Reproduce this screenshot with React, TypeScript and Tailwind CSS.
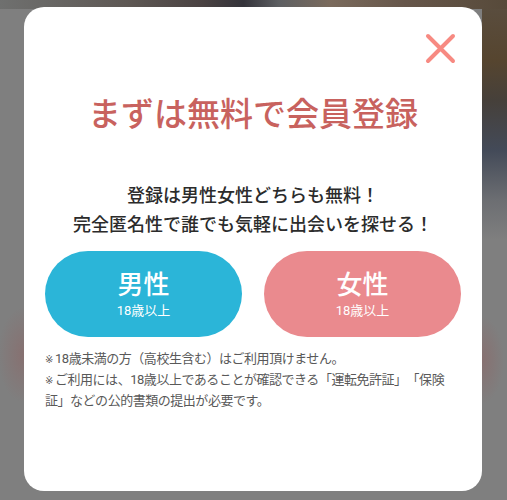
import React from 'react'

const font = 'font-[Roboto,"Noto_Sans_CJK_JP",sans-serif]'

// notes begin with a narrow reference mark, as the source font draws it
const note =
  "before:inline-block before:w-[10px] before:font-['DejaVu_Sans',sans-serif] before:text-[10px] before:tracking-normal before:content-['※']"

function CloseIcon() {
  return (
    <svg width="31" height="31" viewBox="0 0 31 31" fill="none">
      <path
        d="M3 3L28 28M28 3L3 28"
        stroke="#f78a82"
        strokeWidth="4"
        strokeLinecap="round"
      />
    </svg>
  )
}

function GenderButton({ label, color }: { label: string; color: string }) {
  return (
    <button
      className={`flex h-[86px] w-[197px] flex-col items-center justify-center rounded-full text-white ${color}`}
    >
      <span className="text-[26px] leading-[30px] font-medium">{label}</span>
      <span className="mt-[3px] text-[13px] leading-[16px]">18歳以上</span>
    </button>
  )
}

export default function App() {
  return (
    <div
      className={`h-[500px] w-full overflow-hidden pt-[7px] pl-[24px] ${font} [text-spacing-trim:space-all] [background:linear-gradient(to_right,#6f706f_0%,#5e5854_25%,#4a4242_40%,#34333a_48%,#5d5f62_55%,#7a6a5c_65%,#66564a_80%,#574a3a_100%)_top/100%_9px_no-repeat,linear-gradient(to_bottom,#5a4e40_0px,#56452f_60px,#46403a_100px,#434a58_150px,#6c6e72_200px,#7f7f7f_240px)_right_top/25px_300px_no-repeat,radial-gradient(26px_48px_at_24px_355px,rgba(150,85,85,0.35),transparent),radial-gradient(22px_44px_at_482px_360px,rgba(150,85,85,0.35),transparent),#7f7f7f]`}
    >
      <div className="relative h-[484px] w-[458px] rounded-[20px] bg-white px-[21px] pt-[88px]">
        <button className="absolute top-[26px] right-[26px]">
          <CloseIcon />
        </button>
        <h1 className="text-center text-[33px] leading-[40px] font-medium text-[#c8625e]">
          まずは無料で会員登録
        </h1>
        <p className="mt-[46px] text-center text-[18px] leading-[29px] font-medium text-[#2b2b2b]">
          登録は男性女性どちらも無料！
          <br />
          完全匿名性で誰でも気軽に出会いを探せる！
        </p>
        <div className="mt-[12px] flex justify-between">
          <GenderButton label="男性" color="bg-[#2bb5d8]" />
          <GenderButton label="女性" color="bg-[#ea8a8e]" />
        </div>
        <div className="mt-[12px] text-[13px] leading-[20px] tracking-[-0.47px] text-[#595959]">
          <p className={note}>18歳未満の方（高校生含む）はご利用頂けません。</p>
          <p className={note}>
            ご利用には、18歳以上であることが確認できる「運転免許証」「保険証」などの公的書類の提出が必要です。
          </p>
        </div>
      </div>
    </div>
  )
}
